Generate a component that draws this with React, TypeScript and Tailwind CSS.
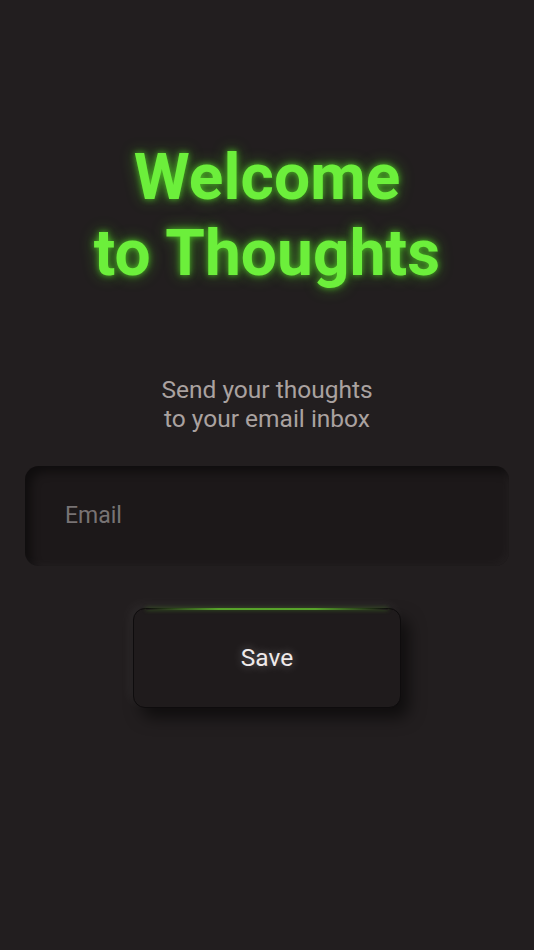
export default function App() {
  return (
    <div className="min-h-[950px] w-full bg-[#221e1f] flex flex-col items-center font-['Roboto',sans-serif]">
      <h1
        className="mt-[140px] text-center text-[64px] leading-[76px] font-bold text-[#6cef3b] tracking-[0.1px]"
        style={{ textShadow: "0 0 6px rgba(90,230,40,0.75), 0 0 16px rgba(80,220,30,0.45)" }}
      >
        Welcome
        <br />
        to Thoughts
      </h1>

      <p className="mt-[83px] text-center text-[24.5px] leading-[29px] text-[#aaa2a0]">
        Send your thoughts
        <br />
        to your email inbox
      </p>

      <div className="mt-[33px] w-full px-[25px]">
        <div className="h-[100px] rounded-[14px] bg-[#1c1819] flex items-center px-[40px] shadow-[inset_6px_6px_10px_rgba(0,0,0,0.45),inset_-3px_-3px_8px_rgba(255,255,255,0.03)]">
          <input
            placeholder="Email"
            className="w-full bg-transparent outline-none text-[23px] text-[#ddd] placeholder:text-[#787374]"
          />
        </div>
      </div>

      <button className="relative mt-[42px] w-[268px] h-[100px] rounded-[12px] bg-[#1f1b1c] border border-[#0e0c0d] shadow-[8px_10px_16px_rgba(0,0,0,0.55),-4px_-4px_12px_rgba(255,255,255,0.05)] flex items-center justify-center">
        <span className="absolute left-[12px] right-[12px] top-[-1px] h-[2px] rounded-full bg-[linear-gradient(90deg,rgba(90,170,40,0)_0%,rgba(95,180,45,0.9)_30%,rgba(95,180,45,0.9)_70%,rgba(90,170,40,0)_100%)] shadow-[0_0_4px_rgba(95,180,45,0.5)]" />
        <span
          className="text-[24.5px] text-[#efeaea]"
          style={{ textShadow: "0 0 10px rgba(255,255,255,0.35)" }}
        >
          Save
        </span>
      </button>
    </div>
  );
}
